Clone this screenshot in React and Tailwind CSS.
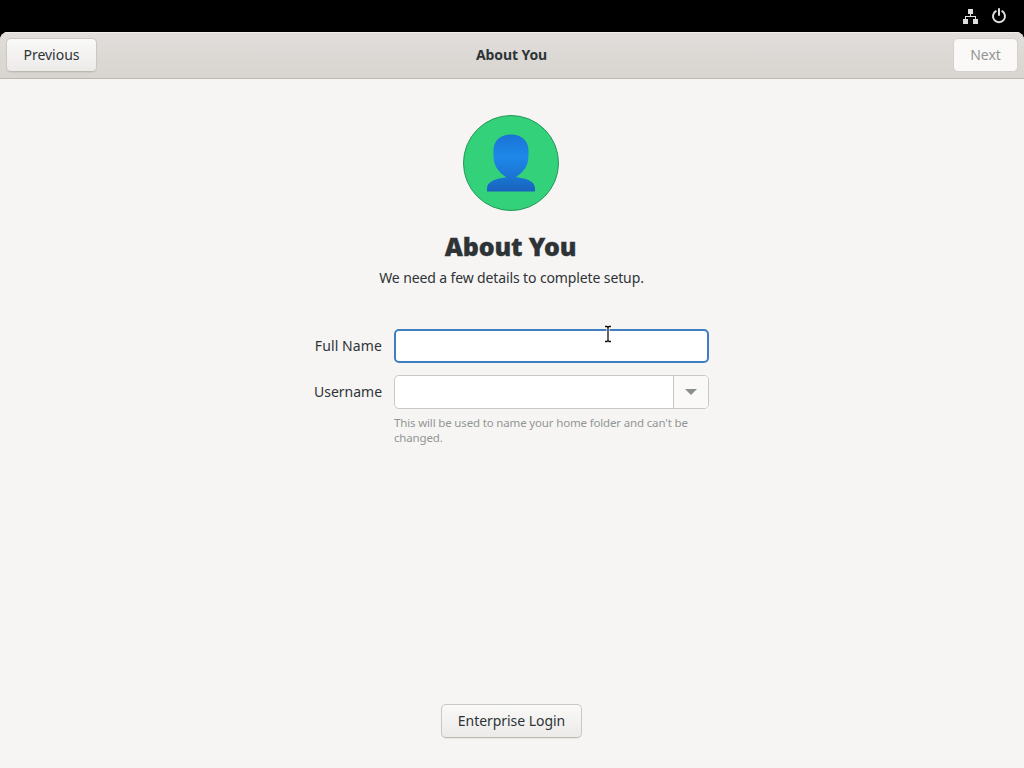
import React from 'react';

const NetworkIcon = () => (
    <svg width="16" height="16" viewBox="0 0 16 16" fill="#dedede">
        <path d="M5 1h5v5H5zM0 11h5v5H0zM10 11h5v5h-5z" />
        <path d="M7 6h1v2h5v3h-1V9H3v2H2V8h5z" />
    </svg>
);

const PowerIcon = () => (
    <svg width="16" height="16" viewBox="0 0 16 16" fill="none" stroke="#dedede" strokeWidth="2" strokeLinecap="round">
        <path d="M8 1v6" />
        <path d="M4.8 3.2a6 6 0 1 0 6.4 0" />
    </svg>
);

const Avatar = () => (
    <svg width="96" height="96" viewBox="0 0 96 96">
        <defs>
            <linearGradient id="head" x1="0" y1="0" x2="0" y2="1">
                <stop offset="0" stopColor="#1a73d6" />
                <stop offset="0.5" stopColor="#1e88e8" />
                <stop offset="1" stopColor="#1b72d2" />
            </linearGradient>
            <linearGradient id="shoulders" x1="0" y1="0" x2="0" y2="1">
                <stop offset="0" stopColor="#1976d2" />
                <stop offset="1" stopColor="#1a62bd" />
            </linearGradient>
        </defs>
        <circle cx="48" cy="48" r="47.5" fill="#33d17a" stroke="#27965a" />
        <path d="M24 76.5v-3c0-6 7-9.5 15-10.500l5-1h9l5 1c8 1 14 4.500 14 10.500v3z" fill="url(#shoulders)" />
        <path
            d="M48 19.500C36.500 19.500 30.500 26.500 30.500 35.500c0 5-.3 8.500 1.300 13.500 2 5.500 6.500 10 11.200 13l1 1q4 1.500 8 0l1-1c4.700-3 9.200-7.500 11.200-13 1.600-5 1.300-8.500 1.300-13.500C65.500 26.500 59.500 19.500 48 19.500z"
            fill="url(#head)"
        />
    </svg>
);

const TextCursor = () => (
    <svg className="absolute left-[209px] -top-[4px]" width="10" height="18" viewBox="0 0 10 18" fill="none">
        <path d="M1.5 1.5h2.500l1 1 1-1h2.500M1.500 16.500h2.500l1-1 1 1h2.500M5 2v14" stroke="#fff" strokeWidth="3" />
        <path d="M2 1.5h2l1 1 1-1h2M2 16.500h2l1-1 1 1h2M5 2v14" stroke="#111" strokeWidth="1.3" />
    </svg>
);

const buttonClass =
    'h-[34px] rounded-[5px] border border-[#cdc7c2] border-b-[#bfb8b1] bg-linear-to-b from-[#f9f9f8] to-[#edebe9] shadow-[0_1px_1px_rgba(0,0,0,0.06)] leading-5';

export default function App() {
    return (
        <div className="flex h-screen w-full flex-col bg-black font-['Noto_Sans','Open_Sans',sans-serif] text-[14px] text-[#2e3436]">
            <div className="flex h-8 shrink-0 items-center justify-end gap-3 pr-[17px]">
                <NetworkIcon />
                <PowerIcon />
            </div>
            <div className="flex min-h-0 flex-1 flex-col overflow-hidden rounded-t-[8px] bg-[#f6f5f4]">
                <header className="grid h-[47px] shrink-0 grid-cols-[1fr_auto_1fr] items-center border-b border-[#bfb8b1] bg-linear-to-b from-[#e1dedb] to-[#d8d4d0] px-1.5 shadow-[inset_0_1px_0_#f0eeec]">
                    <button className={`w-[91px] ${buttonClass}`}>Previous</button>
                    <h1 className="mr-px text-[14px] font-bold leading-5 tracking-[-0.1px]">About You</h1>
                    <button className="h-[34px] w-[65px] justify-self-end rounded-[5px] border border-[#d5d0cc] bg-[#faf9f8] leading-5 text-[#929595]">
                        Next
                    </button>
                </header>
                <main className="flex flex-1 flex-col items-center pt-9 pb-[30px]">
                    <div className="mr-[2px]">
                        <Avatar />
                    </div>
                    <h2 className="mt-[18px] mr-[3px] text-[25px] font-black leading-[34px] tracking-[-0.15px] [-webkit-text-stroke:0.3px_#2e3436]">
                        About You
                    </h2>
                    <p className="mt-[5px] mr-[1px] leading-5 tracking-[-0.12px]">We need a few details to complete setup.</p>
                    <form className="mt-[41px] mr-[1px] grid grid-cols-[68px_315px] gap-x-3">
                        <label className="self-center text-right leading-5 tracking-[0.1px] whitespace-nowrap">Full Name</label>
                        <div className="relative h-[34px]">
                            <input className="block h-[34px] w-full rounded-[5px] border-2 border-[#3f7fc0] bg-white px-2 outline-none" />
                            <TextCursor />
                        </div>
                        <label className="mt-3 self-center text-right leading-5 whitespace-nowrap">Username</label>
                        <div className="mt-3 flex h-[34px] overflow-hidden rounded-[5px] border border-[#cdc7c2] bg-white">
                            <input className="min-w-0 flex-1 px-2 outline-none" />
                            <div className="flex w-[35px] items-center justify-center border-l border-[#cdc7c2] bg-[#faf9f8]">
                                <svg width="12" height="6" viewBox="0 0 12 6" fill="#8b8e8f">
                                    <path d="M0 0h12L6 6z" />
                                </svg>
                            </div>
                        </div>
                        <p className="col-start-2 mt-[6px] text-[11.5px] leading-[15px] tracking-[-0.16px] text-[#929595]">
                            This will be used to name your home folder and can't be
                            <br />
                            changed.
                        </p>
                    </form>
                    <button className={`mt-auto mr-[1px] w-[141px] tracking-[-0.05px] ${buttonClass}`}>Enterprise Login</button>
                </main>
            </div>
        </div>
    );
}
